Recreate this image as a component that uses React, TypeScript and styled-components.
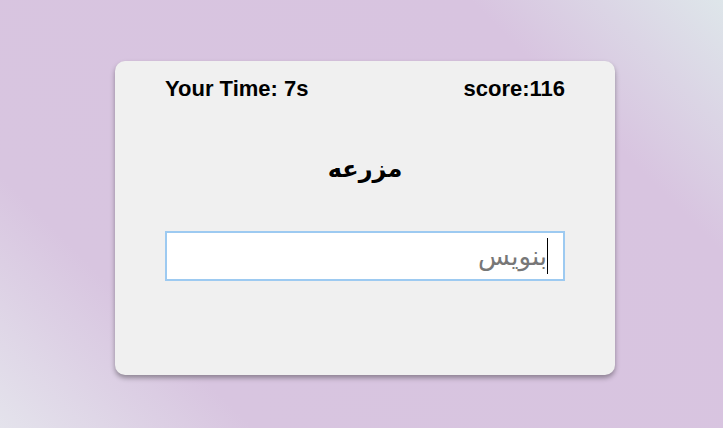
import React from "react";
import styled, { createGlobalStyle } from "styled-components";

const GlobalStyle = createGlobalStyle`
  html, body {
    margin: 0;
    padding: 0;
    height: 100%;
  }
  body {
    font-family: "Liberation Sans", Arial, "DejaVu Sans", sans-serif;
    background: linear-gradient(45deg, #e4e3ec 0%, #d8c5e0 22%, #d8c4e0 78%, #dee6ea 100%);
    background-attachment: fixed;
  }
  #root {
    min-height: 100vh;
  }
`;

const Page = styled.div`
  min-height: 100vh;
  box-sizing: border-box;
  display: flex;
  justify-content: center;
  align-items: flex-start;
  padding: 61px 0 0 7px;
`;

const Card = styled.div`
  width: 500px;
  height: 314px;
  box-sizing: border-box;
  background: #f0f0f0;
  border-radius: 10px;
  box-shadow: 0 3px 5px rgba(0, 0, 0, 0.35);
  padding: 15px 50px 0;
  display: flex;
  flex-direction: column;
`;

const Header = styled.div`
  display: flex;
  justify-content: space-between;
  align-items: center;
  font-size: 22px;
  font-weight: bold;
  color: #000;
`;

const Stat = styled.span`
  line-height: 25px;
`;

const Word = styled.h2`
  margin: 52px 0 0;
  text-align: center;
  font-family: "Liberation Sans", "DejaVu Sans", sans-serif;
  font-size: 24px;
  font-weight: bold;
  line-height: 32px;
  color: #000;
`;

const Field = styled.div`
  position: relative;
  margin-top: 46px;
`;

const AnswerInput = styled.input`
  display: block;
  width: 100%;
  height: 50px;
  box-sizing: border-box;
  border: 2px solid #9dcaf1;
  outline: none;
  background: #fff;
  padding: 0 16px;
  direction: rtl;
  text-align: right;
  font-family: "Liberation Sans", "DejaVu Sans", sans-serif;
  font-size: 26px;
  color: #000;
  caret-color: transparent;

  &::placeholder {
    color: #777;
  }
`;

const Caret = styled.span`
  position: absolute;
  top: 7px;
  right: 17px;
  width: 1px;
  height: 36px;
  background: #000;
  pointer-events: none;
`;

export default function App() {
  return (
    <>
      <GlobalStyle />
      <Page>
        <Card>
          <Header>
            <Stat>Your Time: 7s</Stat>
            <Stat>score:116</Stat>
          </Header>
          <Word>مزرعه</Word>
          <Field>
            <AnswerInput type="text" placeholder="بنویس" autoFocus />
            <Caret />
          </Field>
        </Card>
      </Page>
    </>
  );
}
